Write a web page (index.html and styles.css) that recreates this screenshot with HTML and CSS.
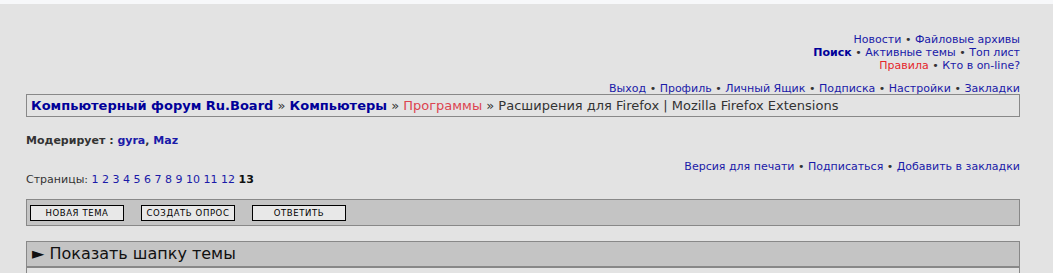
FILE: index.html
```html
<!DOCTYPE html>
<html lang="ru">
<head>
  <meta charset="UTF-8">
  <title>Расширения для Firefox | Mozilla Firefox Extensions</title>
  <link rel="stylesheet" href="styles.css">
</head>
<body>
  <div class="topstrip"></div>

  <div class="page">
    <div class="toplinks">
      <div><a href="#">Новости</a> • <a href="#">Файловые архивы</a></div>
      <div><a href="#" class="strong">Поиск</a> • <a href="#">Активные темы</a> • <a href="#">Топ лист</a></div>
      <div><a href="#" class="red">Правила</a> • <a href="#">Кто в on-line?</a></div>
    </div>

    <div class="userlinks">
      <a href="#">Выход</a> • <a href="#">Профиль</a> • <a href="#">Личный Ящик</a> • <a href="#">Подписка</a> • <a href="#">Настройки</a> • <a href="#">Закладки</a>
    </div>

    <div class="crumbs">
      <a href="#" class="strong">Компьютерный форум Ru.Board</a> » <a href="#" class="strong">Компьютеры</a> » <a href="#" class="pink">Программы</a> » Расширения для Firefox | Mozilla Firefox Extensions
    </div>

    <div class="moderators">Модерирует : <a href="#">gyra</a>, <a href="#">Maz</a></div>

    <div class="tools">
      <a href="#">Версия для печати</a> • <a href="#">Подписаться</a> • <a href="#">Добавить в закладки</a>
    </div>

    <div class="pages">
      Страницы: <a href="#">1</a> <a href="#">2</a> <a href="#">3</a> <a href="#">4</a> <a href="#">5</a> <a href="#">6</a> <a href="#">7</a> <a href="#">8</a> <a href="#">9</a> <a href="#">10</a> <a href="#">11</a> <a href="#">12</a> <b>13</b>
    </div>

    <div class="actions">
      <button>Новая тема</button>
      <button>Создать опрос</button>
      <button>Ответить</button>
    </div>

    <div class="topic-head">► Показать шапку темы</div>
    <div class="topic-body"></div>
  </div>
</body>
</html>
```

FILE: styles.css
```css
body {
  margin: 0;
  background-color: #e3e3e3;
  font-family: "DejaVu Sans", Verdana, sans-serif;
  font-size: 11px;
  color: #333;
  overflow: hidden;
}

a {
  color: #1a1aa8;
  text-decoration: none;
}

a.strong {
  color: #000099;
  font-weight: bold;
}

a.red {
  color: #e5262b;
}

a.pink {
  color: #dc4350;
}

.topstrip {
  height: 4px;
  background-color: #f7f8fa;
}

.page {
  padding: 0 33px 0 26px;
}

.toplinks {
  margin-top: 29px;
  text-align: right;
  line-height: 13px;
}

.userlinks {
  margin-top: 10px;
  text-align: right;
  line-height: 13px;
}

.crumbs {
  margin-top: -1px;
  height: 21px;
  line-height: 21px;
  border: 1px solid #888;
  padding-left: 4px;
  font-size: 13px;
}

.moderators {
  margin-top: 17px;
  font-weight: bold;
  line-height: 13px;
}

.tools {
  margin-top: 13px;
  text-align: right;
  line-height: 13px;
}

.pages {
  line-height: 13px;
}

.pages b {
  color: #111;
}

.actions {
  margin-top: 13px;
  height: 25px;
  border: 1px solid #888;
  background-color: #c4c4c4;
  display: flex;
  align-items: center;
  gap: 17px;
  padding-left: 3px;
}

.actions button {
  width: 94px;
  height: 16px;
  padding: 0;
  border: 1px solid #000;
  background-color: #e8e8e8;
  font-family: "DejaVu Sans", Verdana, sans-serif;
  font-size: 8.5px;
  letter-spacing: 0.6px;
  white-space: nowrap;
  text-transform: uppercase;
  color: #000;
}

.topic-head {
  margin-top: 15px;
  height: 24px;
  line-height: 24px;
  border: 1px solid #888;
  border-bottom-width: 2px;
  background-color: #c4c4c4;
  padding-left: 5px;
  font-size: 16px;
  color: #111;
}

.topic-body {
  height: 5px;
  border-left: 1px solid #888;
  border-right: 1px solid #888;
}
```
